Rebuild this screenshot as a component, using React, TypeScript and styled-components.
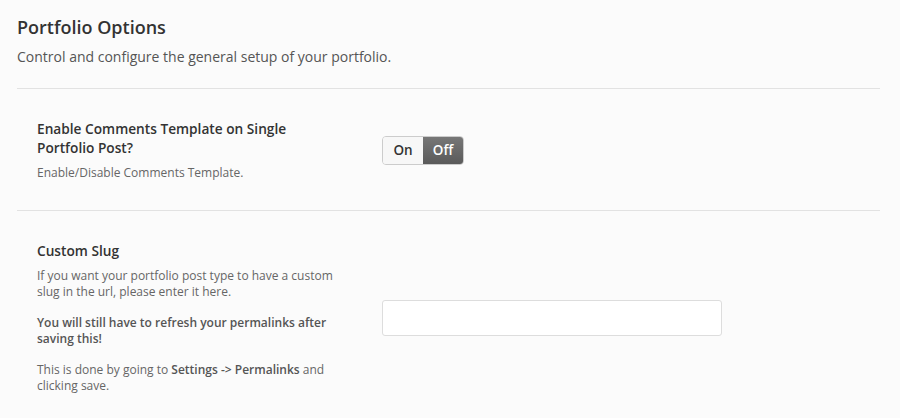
import React from 'react';
import styled, { createGlobalStyle } from 'styled-components';

const GlobalStyle = createGlobalStyle`
  html, body {
    margin: 0;
    padding: 0;
    background: #fbfbfb;
  }

  body {
    font-family: 'Open Sans', 'Noto Sans', sans-serif;
    color: #555;
  }
`;

const Page = styled.div`
  width: 900px;
  height: 418px;
  box-sizing: border-box;
  padding: 0 20px 0 17px;
  overflow: hidden;
`;

const Header = styled.div`
  padding-top: 15px;
  padding-bottom: 21px;
  border-bottom: 1px solid #e2e2e2;
`;

const Title = styled.h2`
  margin: 0;
  font-size: 18px;
  line-height: 24px;
  font-weight: 600;
  color: #333;
`;

const Subtitle = styled.p`
  margin: 8px 0 0;
  font-size: 14px;
  line-height: 20px;
  color: #555;
`;

const OptionRow = styled.div<{ $last?: boolean }>`
  display: flex;
  align-items: center;
  padding: 30px 20px 29px;
  border-bottom: ${(p) => (p.$last ? 'none' : '1px solid #e2e2e2')};
`;

const LabelColumn = styled.div`
  width: 306px;
  margin-right: 39px;
  flex-shrink: 0;
`;

const OptionTitle = styled.h4`
  margin: 0 0 8px;
  font-size: 13.7px;
  line-height: 19px;
  font-weight: 600;
  color: #333;
`;

const OptionDesc = styled.p`
  margin: 0 0 15px;
  font-size: 12px;
  line-height: 16px;
  color: #666;

  &:last-child {
    margin-bottom: 0;
  }
`;

const Strong = styled.strong`
  font-weight: 600;
  color: #555;
`;

const ControlColumn = styled.div`
  flex: 1;
  display: flex;
`;

const Toggle = styled.div`
  display: flex;
  height: 29px;
  border: 1px solid #ccc;
  border-radius: 4px;
  overflow: hidden;
  box-sizing: border-box;
`;

const ToggleOption = styled.span<{ $active?: boolean }>`
  display: flex;
  align-items: center;
  justify-content: center;
  width: 40px;
  font-size: 13.5px;
  font-weight: 600;
  color: ${(p) => (p.$active ? '#fff' : '#333')};
  background: ${(p) =>
    p.$active ? 'linear-gradient(#777, #5a5a5a)' : '#f7f7f7'};
`;

const TextInput = styled.input`
  width: 340px;
  height: 36px;
  box-sizing: border-box;
  border: 1px solid #ddd;
  border-radius: 3px;
  background: #fff;
  font-family: inherit;
  font-size: 13px;
  padding: 0 10px;
  outline: none;
`;

export default function App() {
  return (
    <>
      <GlobalStyle />
      <Page>
        <Header>
          <Title>Portfolio Options</Title>
          <Subtitle>
            Control and configure the general setup of your portfolio.
          </Subtitle>
        </Header>

        <OptionRow>
          <LabelColumn>
            <OptionTitle>
              Enable Comments Template on Single Portfolio Post?
            </OptionTitle>
            <OptionDesc>Enable/Disable Comments Template.</OptionDesc>
          </LabelColumn>
          <ControlColumn>
            <Toggle>
              <ToggleOption>On</ToggleOption>
              <ToggleOption $active>Off</ToggleOption>
            </Toggle>
          </ControlColumn>
        </OptionRow>

        <OptionRow $last>
          <LabelColumn>
            <OptionTitle>Custom Slug</OptionTitle>
            <OptionDesc>
              If you want your portfolio post type to have a custom slug in
              the url, please enter it here.
            </OptionDesc>
            <OptionDesc>
              <Strong>
                You will still have to refresh your permalinks after saving
                this!
              </Strong>
            </OptionDesc>
            <OptionDesc>
              This is done by going to <Strong>Settings -&gt; Permalinks</Strong>{' '}
              and clicking save.
            </OptionDesc>
          </LabelColumn>
          <ControlColumn>
            <TextInput type="text" />
          </ControlColumn>
        </OptionRow>
      </Page>
    </>
  );
}
